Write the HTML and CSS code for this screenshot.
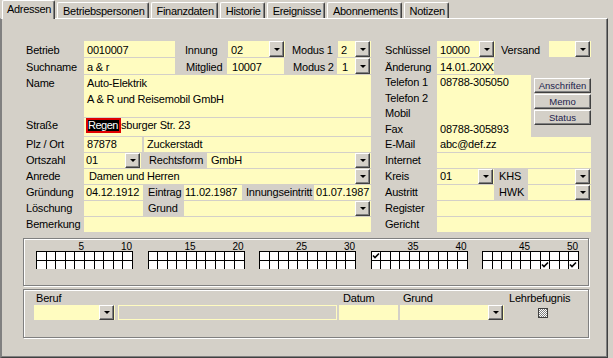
FILE: index.html
```html
<!DOCTYPE html>
<html>
<head>
  <title>Adressen</title>
  <meta charset="utf-8">
  <link rel="stylesheet" href="styles.css">
</head>
<body>
  <div class="tabs">
    <div class="tab on">Adressen</div>
    <div class="tab">Betriebspersonen</div>
    <div class="tab">Finanzdaten</div>
    <div class="tab">Historie</div>
    <div class="tab">Ereignisse</div>
    <div class="tab">Abonnements</div>
    <div class="tab">Notizen</div>
  </div>
  <div class="sheet">
    <div class="form">
      <div class="col col-left">
        <div class="row top">
          <div class="lbl">Betrieb</div>
          <div class="fld w91">0010007</div>
          <div class="tag w53 pl10">Innung</div>
          <div class="fld combo w57"><span class="val">02</span><i class="drop"></i></div>
          <div class="tag w53 pl7">Modus 1</div>
          <div class="fld combo w33"><span class="val">2</span><i class="drop"></i></div>
        </div>
        <div class="row top">
          <div class="lbl">Suchname</div>
          <div class="fld w91">a &amp; r</div>
          <div class="tag w52 pl11">Mitglied</div>
          <div class="fld w57 pl5">10007</div>
          <div class="tag w53 pl9">Modus 2</div>
          <div class="fld combo w34 pl5"><span class="val">1</span><i class="drop"></i></div>
        </div>
        <div class="row memo">
          <div class="lbl">Name</div>
          <div class="fld w287">Auto-Elektrik<br>A &amp; R und Reisemobil GmbH</div>
        </div>
        <div class="row street">
          <div class="lbl">Straße</div>
          <div class="fld w287 pl2"><span class="hit">Regen</span>sburger Str. 23</div>
        </div>
        <div class="row">
          <div class="lbl">Plz / Ort</div>
          <div class="fld w58">87878</div>
          <div class="fld w227 ml2">Zuckerstadt</div>
        </div>
        <div class="row">
          <div class="lbl">Ortszahl</div>
          <div class="fld combo w57 pl2"><span class="val">01</span><i class="drop"></i></div>
          <div class="tag w66 pl8">Rechtsform</div>
          <div class="fld combo w164 pl4"><span class="val">GmbH</span><i class="drop"></i></div>
        </div>
        <div class="row">
          <div class="lbl">Anrede</div>
          <div class="fld combo w287 pl5"><span class="val">Damen und Herren</span><i class="drop"></i></div>
        </div>
        <div class="row">
          <div class="lbl">Gründung</div>
          <div class="fld w59 pl2">04.12.1912</div>
          <div class="tag w41 pl5">Eintrag</div>
          <div class="fld w58 pl1">11.02.1987</div>
          <div class="tag w72 pl4">Innungseintritt</div>
          <div class="fld w57 pl2">01.07.1987</div>
        </div>
        <div class="row">
          <div class="lbl">Löschung</div>
          <div class="fld w59"></div>
          <div class="tag w41 pl5">Grund</div>
          <div class="fld combo w187"><span class="val"></span><i class="drop"></i></div>
        </div>
        <div class="row">
          <div class="lbl">Bemerkung</div>
          <div class="fld w287"></div>
        </div>
      </div>

      <div class="col col-right">
        <div class="row top">
          <div class="lbl">Schlüssel</div>
          <div class="fld combo w58"><span class="val">10000</span><i class="drop"></i></div>
          <div class="tag w54 pl6">Versand</div>
          <div class="fld combo w42"><span class="val"></span><i class="drop"></i></div>
        </div>
        <div class="row top">
          <div class="lbl">Änderung</div>
          <div class="fld w57">14.01.20<span class="xx">XX</span></div>
        </div>
        <div class="tel-block">
          <div class="tel-rows">
            <div class="row tel"><div class="lbl">Telefon 1</div><div class="fld w94">08788-305050</div></div>
            <div class="row tel"><div class="lbl">Telefon 2</div><div class="fld w94"></div></div>
            <div class="row tel"><div class="lbl">Mobil</div><div class="fld w94"></div></div>
            <div class="row tel"><div class="lbl">Fax</div><div class="fld w94">08788-305893</div></div>
          </div>
          <div class="tel-btns">
            <div class="btn">Anschriften</div>
            <div class="btn">Memo</div>
            <div class="btn">Status</div>
          </div>
        </div>
        <div class="row">
          <div class="lbl">E-Mail</div>
          <div class="fld w154">abc@def.zz</div>
        </div>
        <div class="row">
          <div class="lbl">Internet</div>
          <div class="fld w154"></div>
        </div>
        <div class="row">
          <div class="lbl">Kreis</div>
          <div class="fld combo w57"><span class="val">01</span><i class="drop"></i></div>
          <div class="tag w33 pl4 ml1">KHS</div>
          <div class="fld combo w63"><span class="val"></span><i class="drop"></i></div>
        </div>
        <div class="row">
          <div class="lbl">Austritt</div>
          <div class="fld w57"></div>
          <div class="tag w33 pl4 ml1">HWK</div>
          <div class="fld combo w63"><span class="val"></span><i class="drop"></i></div>
        </div>
        <div class="row">
          <div class="lbl">Register</div>
          <div class="fld w154"></div>
        </div>
        <div class="row">
          <div class="lbl">Gericht</div>
          <div class="fld w154"></div>
        </div>
      </div>
    </div>

    <div class="gbox checks">
      <div class="cb-group">
        <div class="cb-nums"><span>5</span><span>10</span></div>
        <div class="cb-grid">
          <i></i><i></i><i></i><i></i><i></i><i></i><i></i><i></i><i></i><i></i>
          <i></i><i></i><i></i><i></i><i></i><i></i><i></i><i></i><i></i><i></i>
        </div>
      </div>
      <div class="cb-group">
        <div class="cb-nums"><span>15</span><span>20</span></div>
        <div class="cb-grid">
          <i></i><i></i><i></i><i></i><i></i><i></i><i></i><i></i><i></i><i></i>
          <i></i><i></i><i></i><i></i><i></i><i></i><i></i><i></i><i></i><i></i>
        </div>
      </div>
      <div class="cb-group">
        <div class="cb-nums"><span>25</span><span>30</span></div>
        <div class="cb-grid">
          <i></i><i></i><i></i><i></i><i></i><i></i><i></i><i></i><i></i><i></i>
          <i></i><i></i><i></i><i></i><i></i><i></i><i></i><i></i><i></i><i></i>
        </div>
      </div>
      <div class="cb-group">
        <div class="cb-nums"><span>35</span><span>40</span></div>
        <div class="cb-grid">
          <i><svg class="tick" viewBox="0 0 8 7"><path d="M1 3.5 L3 5.5 L7 1.5"/></svg></i><i></i><i></i><i></i><i></i><i></i><i></i><i></i><i></i><i></i>
          <i></i><i></i><i></i><i></i><i></i><i></i><i></i><i></i><i></i><i></i>
        </div>
      </div>
      <div class="cb-group">
        <div class="cb-nums"><span>45</span><span>50</span></div>
        <div class="cb-grid">
          <i></i><i></i><i></i><i></i><i></i><i></i><i></i><i></i><i></i><i></i>
          <i></i><i></i><i></i><i></i><i></i><i></i><i><svg class="tick" viewBox="0 0 8 7"><path d="M1 3.5 L3 5.5 L7 1.5"/></svg></i><i></i><i></i><i><svg class="tick" viewBox="0 0 8 7"><path d="M1 3.5 L3 5.5 L7 1.5"/></svg></i>
        </div>
      </div>
    </div>

    <div class="gbox trade">
      <div class="tcol">
        <div class="tlbl pl2">Beruf</div>
        <div class="fld combo w81"><span class="val"></span><i class="drop"></i></div>
      </div>
      <div class="tcol ml3">
        <div class="tlbl"></div>
        <div class="fld off w219"></div>
      </div>
      <div class="tcol ml2">
        <div class="tlbl pl4">Datum</div>
        <div class="fld w59"></div>
      </div>
      <div class="tcol ml2">
        <div class="tlbl pl3">Grund</div>
        <div class="fld combo w104"><span class="val"></span><i class="drop"></i></div>
      </div>
      <div class="tcol ml5">
        <div class="tlbl">Lehrbefugnis</div>
        <div class="chk"></div>
      </div>
    </div>
  </div>
</body>
</html>
```

FILE: styles.css
```css
html, body {
  margin: 0;
  padding: 0;
}
* {
  box-sizing: border-box;
}
body {
  width: 613px;
  height: 358px;
  overflow: hidden;
  background: #d4d0c8;
  color: #000;
  font-family: "Liberation Sans", Arial, sans-serif;
  font-size: 11px;
  letter-spacing: -0.2px;
}

/* tab strip */
.tabs {
  display: flex;
  align-items: flex-end;
  height: 18px;
  padding-left: 2px;
  position: relative;
  z-index: 1;
}
.tab {
  height: 16px;
  padding: 1px 3px 0 5px;
  margin-right: 2px;
  line-height: 15px;
  letter-spacing: -0.3px;
  white-space: nowrap;
  border: 1px solid #fff;
  border-right-color: #404040;
  border-bottom: 0;
  border-radius: 2px 2px 0 0;
  box-shadow: inset -1px 0 #808080;
}
.tab.on {
  height: 19px;
  margin-bottom: -1px;
  padding-left: 4px;
  background: #d4d0c8;
}

.sheet {
  width: 608px;
  height: 340px;
  padding-top: 22px;
  border-top: 1px solid #fff;
  border-left: 2px solid #808080;
  border-right: 1px solid #404040;
  border-bottom: 1px solid #404040;
  box-shadow: inset -1px -1px #808080;
}

/* form rows */
.form {
  display: flex;
  padding-left: 24px;
}
.col-left {
  width: 345px;
}
.col-right {
  width: 206px;
  margin-left: 14px;
}
.row {
  display: flex;
  height: 16px;
  padding-bottom: 1px;
  line-height: 15px;
  white-space: nowrap;
}
.row > * {
  flex: none;
}
.row.top {
  height: 17px;
  line-height: 19px;
}
.row.memo {
  height: 43px;
  line-height: 16px;
}
.row.street {
  height: 19px;
}
.row.tel {
  height: 15.5px;
  padding-bottom: 0;
}
.col-left .lbl {
  width: 58px;
}
.col-right .lbl {
  width: 52px;
}
.fld {
  background: #fffcc0;
  padding-left: 3px;
  white-space: nowrap;
}
.fld.off {
  background: transparent;
  border: 1px solid #fffcc0;
}
.combo {
  display: flex;
}
.combo .val {
  flex: 1;
}
.drop {
  flex: none;
  width: 15px;
  margin-right: 1px;
  display: flex;
  align-items: center;
  justify-content: center;
  background: #d4d0c8;
  border: 1px solid;
  border-color: #fff #404040 #404040 #fff;
  box-shadow: inset -1px -1px #808080;
}
.drop::after {
  content: "";
  border-left: 3px solid transparent;
  border-right: 3px solid transparent;
  border-top: 3px solid #000;
}
.hit {
  display: inline-block;
  vertical-align: top;
  height: 15px;
  padding-right: 1px;
  line-height: 11px;
  letter-spacing: -0.5px;
  background: #000;
  color: #fff;
  border: 2px solid #e00000;
}
.xx {
  letter-spacing: -2px;
}

.tel-block {
  display: flex;
  height: 62px;
}
.tel-btns {
  display: flex;
  flex-direction: column;
  gap: 1px;
  margin-left: 3px;
  padding-top: 3px;
}
.btn {
  width: 57px;
  height: 15px;
  text-align: center;
  font-size: 9.5px;
  line-height: 13px;
  letter-spacing: 0;
  color: #1c1c4c;
  border: 1px solid;
  border-color: #fff #404040 #404040 #fff;
  box-shadow: inset -1px -1px #808080;
}

/* group boxes */
.gbox {
  width: 566px;
  margin-left: 21px;
  border: 1px solid #808080;
  box-shadow: inset 1px 1px #fff, 1px 1px #fff;
}
.checks {
  display: flex;
  gap: 14.5px;
  height: 48px;
  margin-top: 5px;
  padding: 3px 0 0 12px;
}
.cb-nums {
  display: flex;
  height: 9px;
  font-size: 10px;
  line-height: 10px;
  letter-spacing: 0;
}
.cb-nums span {
  width: 48px;
  text-align: right;
}
.cb-grid {
  display: grid;
  grid-template-columns: repeat(10, 1fr);
  width: 97px;
  border-right: 1px solid #000;
}
.cb-grid i {
  height: 9px;
  background: #fff;
  border-left: 1px solid #000;
  border-top: 1px solid #000;
}
.tick {
  display: block;
  width: 8px;
  height: 7px;
  fill: none;
  stroke: #000;
  stroke-width: 1.6;
}
.trade {
  display: flex;
  height: 49px;
  margin-top: 3px;
  padding: 1px 0 0 10px;
}
.tcol {
  display: flex;
  flex-direction: column;
}
.tlbl {
  height: 14px;
  line-height: 13px;
  padding-top: 1px;
}
.trade .fld {
  height: 15px;
}
.chk {
  width: 10px;
  height: 10px;
  margin: 3px 0 0 29px;
  border: 1px solid #404040;
  background: repeating-conic-gradient(#808080 0 25%, #fff 0 50%) 0 0 / 2px 2px;
}

/* sizes */
.w33 { width: 33px; }
.w34 { width: 34px; }
.w41 { width: 41px; }
.w42 { width: 42px; }
.w52 { width: 52px; }
.w53 { width: 53px; }
.w54 { width: 54px; }
.w57 { width: 57px; }
.w58 { width: 58px; }
.w59 { width: 59px; }
.w63 { width: 63px; }
.w66 { width: 66px; }
.w72 { width: 72px; }
.w81 { width: 81px; }
.w91 { width: 91px; }
.w94 { width: 94px; }
.w104 { width: 104px; }
.w154 { width: 154px; }
.w164 { width: 164px; }
.w187 { width: 187px; }
.w219 { width: 219px; }
.w227 { width: 227px; }
.w287 { width: 287px; }
.pl1 { padding-left: 1px; }
.pl2 { padding-left: 2px; }
.pl3 { padding-left: 3px; }
.pl4 { padding-left: 4px; }
.pl5 { padding-left: 5px; }
.pl6 { padding-left: 6px; }
.pl7 { padding-left: 7px; }
.pl8 { padding-left: 8px; }
.pl9 { padding-left: 9px; }
.pl10 { padding-left: 10px; }
.pl11 { padding-left: 11px; }
.ml1 { margin-left: 1px; }
.ml2 { margin-left: 2px; }
.ml3 { margin-left: 3px; }
.ml5 { margin-left: 5px; }
```
